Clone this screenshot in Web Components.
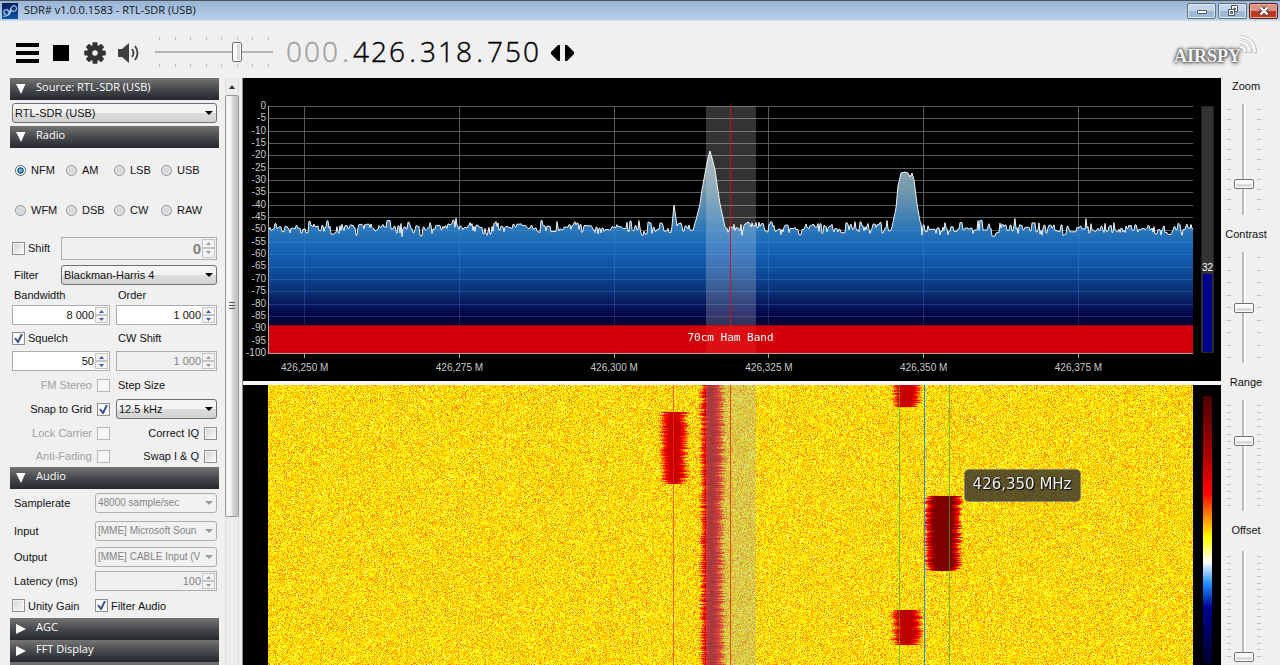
<!DOCTYPE html>
<html lang="en">
<head>
<meta charset="utf-8">
<title>SDR# v1.0.0.1583 - RTL-SDR (USB)</title>
<style>
html, body { margin: 0; height: 100%; overflow: hidden; background: #f0f0f0; }
body { font: 11px/14px "Liberation Sans", sans-serif; color: #111; }
</style>
</head>
<body>
<sdr-app></sdr-app>
<script>
const BASE = `*,*::before,*::after{box-sizing:border-box}button,input,select{font:inherit;color:inherit;margin:0}`;
function define(name, html, setup) {
  const t = document.createElement('template');
  customElements.define(name, class extends HTMLElement {
    connectedCallback() {
      if (this.shadowRoot) return;
      t.innerHTML = (typeof html === 'function' ? html(this) : html).replace('<style>', '<style>' + BASE);
      this.attachShadow({ mode: 'open' }).append(t.content.cloneNode(true));
      if (setup) setup.call(this, this.shadowRoot);
    }
  });
}
const at = (el, n, d = '') => el.getAttribute(n) ?? d;
function rng(seed) {
  return () => { seed = (seed * 1664525 + 1013904223) >>> 0; return seed / 4294967296; };
}

/* ---------- window title bar ---------- */
define('window-titlebar', `
<style>
:host{display:flex;align-items:center;height:21px;flex:none;padding:0 2px;gap:6px;border-top:1px solid #4d5258;
 background:linear-gradient(#98b4d6,#b9d1ea);border-bottom:1px solid #cfdcea;}
.icon{width:16px;height:16px;flex:none}
h1{margin:0;flex:1;font:11px/16px "Open Sans",sans-serif;color:#101418;padding-bottom:2px}
.btns{display:flex;gap:2px}
button{width:29px;height:16px;padding:0;border:1px solid #5f7186;border-radius:2px;box-shadow:inset 0 0 0 1px #dbe7f4;
 background:linear-gradient(#c3d4e8 50%,#9fb8d4 50%);display:grid;place-items:center}
button.close{background:linear-gradient(#dd9384 50%,#b93a25 50%);border-color:#5d2018;box-shadow:inset 0 0 0 1px #eba798}
</style>
<svg class="icon" viewBox="0 0 16 16"><defs><linearGradient id="g" x2="0" y2="1"><stop stop-color="#0a1f52"/><stop offset="1" stop-color="#0d55a8"/></linearGradient></defs><rect width="16" height="16" fill="url(#g)"/><path d="M1 13c3 1 6-1 7-5s3-6 5-5 2 4 0 5-4 0-4-2M9 8c-1 3-3 5-5 4s-3-4-1-5 3 0 4 2" fill="none" stroke="#a9c9ee" stroke-width="1.200"/></svg>
<h1><slot></slot></h1>
<div class="btns">
<button aria-label="Minimize"><svg width="12" height="10"><rect x="1.500" y="4.500" width="9" height="3" rx=".5" fill="#fff" stroke="#4b5563"/></svg></button>
<button aria-label="Restore"><svg width="12" height="12"><path d="M4.500.5h6v6h-6z" fill="#fff" stroke="#4b5563"/><path d="M7 3h1.500v1.500H7z" fill="#8fa6c0" stroke="#4b5563"/><path d="M1.500 4.500h6v6h-6z" fill="#fff" stroke="#4b5563"/><path d="M3.500 6.500h2v2h-2z" fill="#9fb8d4" stroke="#4b5563"/></svg></button>
<button class="close" aria-label="Close"><svg width="12" height="10"><path d="M2.500 1.500l7 7m0-7l-7 7" stroke="#4d3a40" stroke-width="4"/><path d="M2.500 1.500l7 7m0-7l-7 7" stroke="#fff" stroke-width="2.400"/></svg></button>
</div>`);

/* ---------- toolbar ---------- */
define('sdr-toolbar', `
<style>
:host{display:flex;align-items:center;height:56px;flex:none;padding:8px 23px 0 15px}
.tool{border:0;background:none;padding:0;display:grid;place-items:center;width:24px;height:24px;margin-right:10px}
.volume{width:118px;margin:0 12px 2px 4px;display:grid;gap:1px}
.ticks{display:flex;justify-content:space-between;padding:0 4px}
.ticks i{width:1px;height:3px;background:#bdbdbd}
input{appearance:none;width:100%;height:22px;background:linear-gradient(#b5b5b5,#b5b5b5) center/100% 2px no-repeat;border:0}
input::-webkit-slider-thumb{appearance:none;width:10px;height:20px;border:1px solid #707070;border-radius:2px;background:linear-gradient(90deg,#fafafa 50%,#dcdcdc 50%);box-shadow:inset 0 0 0 1px #fff}
.freq{display:flex;font:300 28px/32px "Open Sans",sans-serif;color:#000;margin-top:-4px}
.freq b{font-weight:300;width:18px;text-align:center;-webkit-text-stroke:.4px}
.freq b.dot{width:13px}
.freq .off{color:#a0a0a0}
.tune{border:0;background:none;padding:0;width:10px;height:16px;margin:0 0 0 3px}
.tune svg,.tool svg{display:block}
.tune.first{margin-left:11px}
.logo{margin-left:auto;position:relative;padding-right:16px;margin-top:6px;font:bold 18px/20px "Liberation Serif",serif;color:#f4f4f4;text-shadow:0 0 2px #555,0 0 3px #555,0 0 4px #777,1px 1px 4px #888}
.logo svg{position:absolute;right:0;top:-11px}
</style>
<button class="tool" aria-label="Menu"><svg width="24" height="20"><path d="M1 2h23M1 10h23M1 18h23" stroke="#000" stroke-width="4"/></svg></button>
<button class="tool" aria-label="Stop"><svg width="16" height="16"><rect width="16" height="16"/></svg></button>
<button class="tool" aria-label="Settings"><svg width="22" height="22" viewBox="-11 -11 22 22"><g fill="#333"><g id="teeth"></g><path fill-rule="evenodd" d="M0-8a8 8 0 1 0 .01 0zM0-2.800a2.800 2.800 0 1 1-.01 0z"/></g></svg></button>
<button class="tool" aria-label="Mute"><svg width="24" height="22"><path d="M1 7h4l7-6v20l-7-6H1z" fill="#404040"/><path d="M15 7q3 4 0 8M18 4q5 7 0 14" fill="none" stroke="#404040" stroke-width="1.800"/></svg></button>
<div class="volume"><div class="ticks"></div><input type="range" aria-label="Volume" value="71"><div class="ticks"></div></div>
<div class="freq" role="group" aria-label="Frequency"></div>
<button class="tune first" aria-label="Tune down"><svg width="10" height="16"><path d="M9 0v16H7L0 9V7L7 0z"/></svg></button>
<button class="tune" aria-label="Tune up"><svg width="10" height="16"><path d="M1 0v16h2l7-7V7L3 0z"/></svg></button>
<div class="logo">AIRSPY<svg width="20" height="20"><g fill="none" stroke="#777" stroke-width="3.500" opacity=".4"><path d="M3 12q5 0 6 6M3 7q9 1 11 11M3 2q14 1 16 16"/></g><g fill="none" stroke="#fff" stroke-width="2"><path d="M3 12q5 0 5 5M3 7q9 1 10 10M3 2q14 1 15 15"/></g></svg></div>`,
function (r) {
  r.querySelectorAll('.ticks').forEach(t => t.innerHTML = '<i></i>'.repeat(8));
  r.querySelector('#teeth').innerHTML = [0,45,90,135,180,225,270,315].map(a => `<rect x="-2.500" y="-10.800" width="5" height="5" rx="1" transform="rotate(${a})"/>`).join('');
  r.querySelector('.freq').innerHTML = [...'000.426.318.750'].map((c, i) => `<b class="${c === '.' ? 'dot ' : ''}${i < 4 ? 'off' : ''}">${c}</b>`).join('');
});

/* ---------- collapsible panel ---------- */
define('sdr-panel', el => `
<style>
:host{display:block}
button{display:flex;align-items:center;width:100%;height:22px;border:0;padding:0 0 0 6px;gap:10px;text-align:left;
 background:linear-gradient(#747474,#4c4e51 45%,#24282c);color:#fff;font:11px/18px "Open Sans",sans-serif}
span{padding-bottom:4px}
svg{flex:none}
.body{display:block;padding:0 2px}
</style>
<button aria-expanded="${el.hasAttribute('open')}"><svg width="10" height="10"><path fill="#fff" d="${el.hasAttribute('open') ? 'M0 0h9.500L5 10z' : 'M0 0l10 5L0 10z'}"/></svg><span>${at(el, 'heading')}</span></button>
<div class="body" ${el.hasAttribute('open') ? '' : 'hidden style="display:none"'}><slot></slot></div>`);

/* ---------- form controls ---------- */
define('sdr-select', el => `
<style>
:host{display:flex;align-items:center}
label{flex:0 0 var(--label,0);padding-left:2px}
.box{position:relative;flex:1;min-width:0}
select{appearance:none;display:block;width:100%;height:20px;padding:0 16px 0 2px;border:1px solid #707070;border-radius:3px;
 background:linear-gradient(#f4f4f4 50%,#dedede 50%,#d2d2d2);line-height:18px;overflow:hidden}
select:disabled{color:#838383;opacity:1;border-color:#b0b0b0;background:#f1f1f1;font-size:10px}
svg{position:absolute;right:4px;top:8px;pointer-events:none;fill:#000}
select:disabled + svg{fill:#9a9a9a}
</style>
${el.hasAttribute('label') ? `<label for="s">${at(el, 'label')}</label>` : ''}
<div class="box"><select id="s" ${el.hasAttribute('label') ? '' : `aria-label="${at(el, 'name')}"`} ${el.hasAttribute('disabled') ? 'disabled' : ''}><option>${at(el, 'value')}</option></select>
<svg width="8" height="4"><path d="M0 0h8L4 4z"/></svg></div>`);

define('sdr-number', el => `
<style>
:host{display:flex;align-items:center}
label{flex:0 0 var(--label,0);padding-left:2px}
.box{flex:1;min-width:0;display:flex;height:var(--h,20px);border:1px solid #abadb3;background:#fff;padding:1px}
.box.off{background:#f0f0f0;color:#838383}
input{flex:1;min-width:0;width:0;border:0;padding:0 1px 0 0;text-align:right;background:none;font-size:var(--size,11px)}
input:disabled{-webkit-text-fill-color:#838383}
.spin{display:grid;grid-template-rows:1fr 1fr;width:13px;flex:none}
.spin button{padding:0;border:1px solid #c4c4c4;background:#f3f3f3;display:grid;place-items:center;min-height:0}
svg{fill:#3d5ba9;display:block}
.off svg{fill:#9a9a9a}
</style>
${el.hasAttribute('label') ? `<label for="n">${at(el, 'label')}</label>` : ''}
<div class="box ${el.hasAttribute('disabled') ? 'off' : ''}"><input id="n" type="text" value="${at(el, 'value')}" ${el.hasAttribute('label') ? '' : `aria-label="${at(el, 'name')}"`} ${el.hasAttribute('disabled') ? 'disabled' : ''}>
<div class="spin"><button tabindex="-1" aria-label="Increase"><svg width="5" height="3"><path d="M0 3h5L2.500 0z"/></svg></button><button tabindex="-1" aria-label="Decrease"><svg width="5" height="3"><path d="M0 0h5L2.500 3z"/></svg></button></div></div>`);

define('sdr-check', el => `
<style>
:host{display:block}
label{display:flex;align-items:center;gap:3px}
:host([trailing]) label{flex-direction:row-reverse;gap:5px}
input{appearance:none;flex:none;width:13px;height:13px;border:1px solid #8e8f8f;background:linear-gradient(135deg,#cfd3d8,#fafafa);box-shadow:inset 0 0 0 1px #f4f4f4}
input:checked{background:#fff url('data:image/svg+xml,<svg xmlns="http://www.w3.org/2000/svg" width="11" height="11"><path d="M2 5l3 4 4-8" fill="none" stroke="%233b4f96" stroke-width="2"/></svg>') center no-repeat}
:host([disabled]) label{color:#a0a0a0}
input:disabled{border-color:#b9b9b9;background:#f6f6f6}
</style>
<label><input type="checkbox" ${el.hasAttribute('checked') ? 'checked' : ''} ${el.hasAttribute('disabled') ? 'disabled' : ''}><span>${at(el, 'label')}</span></label>`);

define('sdr-modes', `
<style>
:host{display:grid;grid-template-columns:51px 48px 47px auto;grid-auto-rows:40px;align-items:center;padding:2px 0 3px 3px}
label{display:flex;align-items:center;gap:5px}
input{appearance:none;width:11px;height:11px;flex:none;border-radius:50%;border:1px solid #8e8f8f;background:radial-gradient(#d5d8dc 40%,#fbfbfb)}
input:checked{background:radial-gradient(#6fc0ea 15%,#0d4872 45%,#fff 55%);border-color:#50647c}
</style>`, function (r) {
  r.innerHTML += ['NFM', 'AM', 'LSB', 'USB', 'WFM', 'DSB', 'CW', 'RAW'].map((m, i) =>
    `<label><input type="radio" name="mode" ${i ? '' : 'checked'}><span>${m}</span></label>`).join('');
});

define('sdr-scrollbar', `
<style>
:host{display:flex;flex-direction:column;width:14px;background:#ececec;border:solid #e0e0e0;border-width:0 1px}
button{border:0;background:none;height:17px;padding:0;display:grid;place-items:center}
.thumb{height:422px;border:1px solid #979797;border-radius:2px;background:linear-gradient(90deg,#f5f5f5 40%,#d2d2d4 60%,#bfc0c4);margin:0 -1px;display:grid;place-content:center;gap:1px}
.thumb i{width:6px;height:1px;background:#555;margin-bottom:1px}
.rest{flex:1}
</style>
<button aria-label="Scroll up"><svg width="6" height="4"><path d="M0 4h6L3 0z" fill="#333"/></svg></button>
<div class="thumb"><i></i><i></i><i></i></div><div class="rest"></div>
<button aria-label="Scroll down" style="height:6px"><svg width="6" height="4"><path d="M0 0h6L3 4z" fill="#333"/></svg></button>`);

/* ---------- vertical slider ---------- */
define('sdr-slider', el => `
<style>
:host{display:grid;justify-items:center;gap:10px;height:148px;align-content:start}
:host(:last-child){gap:13px}
label{height:16px;line-height:16px}
.track{display:flex;height:111px;gap:3px;margin-right:4px}
.ticks{display:flex;flex-direction:column;justify-content:space-between;padding:5px 0}
.ticks i{width:4px;height:1px;background:#bdbdbd}
input{appearance:none;writing-mode:vertical-lr;direction:rtl;width:20px;height:111px;border:0;background:linear-gradient(90deg,#bdbdbd 50%,#fff 50%) center/4px 100% no-repeat}
input::-webkit-slider-thumb{appearance:none;width:20px;height:10px;border:1px solid #707070;border-radius:2px;background:linear-gradient(#fafafa 50%,#dcdcdc 50%);box-shadow:inset 0 0 0 1px #fff}
</style>
<label for="r">${at(el, 'label')}</label>
<div class="track"><div class="ticks">${'<i></i>'.repeat(+at(el, 'ticks'))}</div><input id="r" type="range" value="${at(el, 'value')}"><div class="ticks">${'<i></i>'.repeat(+at(el, 'ticks'))}</div></div>`);

/* ---------- spectrum ---------- */
const SPAN = 925;
define('sdr-spectrum', `
<style>
:host{display:grid;grid-template:28px 247px 28px / 25px minmax(0,1fr) 28px;background:#000;color:#c8c8c8;font:10px/12px "Liberation Sans",sans-serif}
.y{grid-area:2/1;display:flex;flex-direction:column;justify-content:space-between;text-align:right;padding-right:2px;margin:-6px 0}
.plot{grid-area:2/2/4/3;position:relative;min-width:0}
canvas{display:block;width:100%;height:253px}
.band{position:absolute;left:0;right:0;top:219px;height:28px;text-align:center;color:#fff;font:11px/26px "DejaVu Sans Mono",monospace}
.x{display:grid;grid-template-columns:repeat(6,16.73%);margin-left:-4.4%;width:100%;text-align:center;padding-top:3px}
.meter{grid-area:2/3;width:13px;margin-left:8px;background:#333;border:1px solid #262626;display:flex;flex-direction:column;justify-content:flex-end;align-items:stretch;color:#fff}
.meter span{text-align:center}
.meter i{height:32%;background:#000090;margin:0 1px}
</style>
<div class="y"></div>
<div class="plot"><canvas></canvas><div class="band">70cm Ham Band</div><div class="x"></div></div>
<div class="meter"><span>32</span><i></i></div>`,
function (r) {
  r.querySelector('.y').innerHTML = Array.from({ length: 21 }, (_, i) => `<span>${i ? -i * 5 : 0}</span>`).join('');
  r.querySelector('.x').innerHTML = [250, 275, 300, 325, 350, 375].map(f => `<span>426,${f} M</span>`).join('');
  const c = r.querySelector('canvas');
  const peak1 = [[426, 121], [428, 114], [432, 98], [434, 84], [438, 62], [440, 52], [442, 45], [444, 52], [447, 64], [449, 78], [452, 98], [457, 121]];
  const peak2 = [[624, 121], [628, 102], [630, 80], [633, 67], [637, 66], [640, 67], [642, 71], [644, 67], [646, 74], [649, 98], [653, 121]];
  const spike = [[404, 120], [406, 99], [409, 120]];
  const interp = (pts, x) => {
    for (let i = 1; i < pts.length; i++) if (x >= pts[i - 1][0] && x <= pts[i][0]) {
      const [a, b] = pts[i - 1], [d, e] = pts[i]; return b + (e - b) * (x - a) / (d - a);
    }
    return 999;
  };
  const draw = () => {
    const w = c.clientWidth, h = 247, k = w / SPAN;
    if (!w) return;
    c.width = w; c.height = 253;
    const g = c.getContext('2d'), rand = rng(7);
    const grid = (col) => {
      g.fillStyle = col;
      for (let i = 0; i < 20; i++) g.fillRect(0, Math.round(i * h / 20), w, 1);
      for (let i = 0; i < 6; i++) g.fillRect(Math.round((36 + i * 154.8) * k), 0, 1, h);
    };
    g.fillStyle = '#000'; g.fillRect(0, 0, w, 253);
    grid('#585858');
    const ys = []; let drift = 0, hold = 0;
    for (let x = 0; x <= w; x++) {
      const s = x / k;
      if (rand() > .35) { hold = (rand() + rand() + rand() - 1.5) * 6.5; drift = drift * .5 + (rand() - .5) * 3; }
      let y = 122 + hold + drift;
      if (s >= 429 && s <= 455 || s >= 624 && s <= 652) y = Math.max(y, 119);
      y = Math.min(y, interp(peak1, s), interp(peak2, s), interp(spike, s));
      ys.push(y);
    }
    const grad = g.createLinearGradient(0, 0, 0, h);
    [[0, '#c8c3b9'], [.19, '#a4aeae'], [.35, '#6f96aa'], [.5, '#2b76b6'], [.57, '#1766b8'], [.66, '#1050a0'], [.76, '#0a2c70'], [.84, '#03074a'], [.9, '#000028'], [1, '#000010']].forEach(s => grad.addColorStop(...s));
    g.beginPath(); g.moveTo(0, h); ys.forEach((y, x) => g.lineTo(x, y)); g.lineTo(w, h); g.closePath();
    g.fillStyle = grad; g.fill();
    g.save(); g.clip(); grid('rgba(90,150,240,.26)'); g.restore();
    g.beginPath(); ys.forEach((y, x) => x ? g.lineTo(x, y) : g.moveTo(x, y));
    g.strokeStyle = '#eef4f8'; g.lineWidth = 1; g.stroke();
    g.fillStyle = '#d10008'; g.fillRect(0, 219, w, 28);
    g.fillStyle = '#8f0010'; g.fillRect(0, 219, w, 1);
    g.fillStyle = 'rgba(255,255,255,.2)'; g.fillRect(438 * k, 0, 50 * k, 219);
    g.fillStyle = 'rgba(255,60,60,.25)'; g.fillRect(438 * k, 219, 50 * k, 28);
    g.fillStyle = 'rgba(225,10,20,.85)'; g.fillRect(Math.round(462 * k), 0, 1, h);
    g.fillStyle = '#aaa'; g.fillRect(0, 0, 1, h); g.fillRect(0, h, w, 1);
    for (let i = 0; i < 6; i++) g.fillRect(Math.round((36 + i * 154.8) * k), h, 1, 5);
  };
  draw(); new ResizeObserver(draw).observe(c);
});

/* ---------- waterfall ---------- */
define('sdr-waterfall', `
<style>
:host{display:grid;grid-template-columns:25px minmax(0,1fr) 28px;background:#000;min-height:0;overflow:hidden}
.view{grid-column:2;position:relative;min-height:0;overflow:hidden}
canvas{display:block;width:100%;height:100%}
.tip{position:absolute;left:75.200%;top:84px;padding:0 8px;height:33px;border:1px solid rgba(150,150,120,.8);border-radius:5px;
 background:rgba(52,50,46,.8);color:#f4f4f4;font:15px/29px "DejaVu Sans",sans-serif;text-shadow:0 0 2px #000,1px 1px 1px #000;white-space:nowrap}
.scale{width:9px;margin:11px 0 6px 10px;background:linear-gradient(#4b0000,#a00 22%,#f00 36%,#f80 45%,#ff0 53%,#fff 62%,#1e90ff 70%,#000091 79%,#000028)}
</style>
<div class="view"><canvas></canvas><div class="tip">426,350 MHz</div></div><div class="scale"></div>`,
function (r) {
  const c = r.querySelector('canvas');
  const stops = [[0, 75, 0, 0], [.22, 170, 0, 0], [.36, 255, 0, 0], [.53, 255, 255, 0], [.625, 255, 255, 255], [.7, 30, 144, 255], [.79, 0, 0, 145], [1, 0, 0, 40]];
  const lut = Array.from({ length: 256 }, (_, n) => {
    const t = n / 255; let i = 1; while (stops[i][0] < t) i++;
    const a = stops[i - 1], b = stops[i], f = (t - a[0]) / (b[0] - a[0]);
    return [1, 2, 3].map(j => a[j] + (b[j] - a[j]) * f);
  });
  // x0, x1, y0, y1, palette level at the core
  const bursts = [[394, 416, 27, 98, .27], [434, 453, -9, 9999, .22], [626, 650, -9, 21, .27], [626, 650, 225, 259, .25], [659, 689, 111, 185, .12]];
  const draw = () => {
    const w = c.clientWidth, h = c.clientHeight, k = w / SPAN;
    if (!w || !h) return;
    c.width = w; c.height = h;
    const g = c.getContext('2d'), img = g.createImageData(w, h), rand = rng(99), d = img.data;
    for (let y = 0; y < h; y++) {
      const jit = bursts.map(() => [(rand() - .5) * 5, (rand() - .5) * 6]);
      for (let x = 0; x < w; x++) {
        const s = x / k;
        const n = (rand() + rand() + rand() + rand() - 2) * .055;
        let t = .508 + n + (rand() > .97 ? .1 * rand() : 0);
        for (let i = 0; i < bursts.length; i++) {
          const b = bursts[i];
          if (y < b[2] || y > b[3] || s < b[0] - 12 || s > b[1] + 16) continue;
          const cut = Math.max(0, 5 - (b[3] - y)) / 2;
          const e = Math.min(1, Math.max(0, Math.min((s - b[0] + 3 - cut + jit[i][0]) / 10, (b[1] + 4 - cut - s + jit[i][1]) / (i === 1 ? 13 : 10))));
          t = t * (1 - e) + (b[4] + n * .6) * e;
        }
        const q = lut[Math.max(0, Math.min(255, t * 255 | 0))], o = (y * w + x) * 4;
        d[o] = q[0]; d[o + 1] = q[1]; d[o + 2] = q[2]; d[o + 3] = 255;
      }
    }
    g.putImageData(img, 0, 0);
    const bar = (x, wd, col) => { g.fillStyle = col; g.fillRect(Math.round(x * k), 0, Math.max(1, Math.round(wd * k)), h); };
    bar(438, 50, 'rgba(150,170,180,.34)');
    bar(405, 1, 'rgba(255,40,0,.65)');
    bar(462, 1, 'rgba(255,50,20,.85)');
    bar(631, 1, 'rgba(40,180,40,.65)');
    bar(681, 1, 'rgba(40,180,40,.65)');
    bar(656, 1, '#2090ff');
  };
  draw(); new ResizeObserver(draw).observe(c);
});

/* ---------- application shell ---------- */
define('sdr-app', `
<style>
:host{display:flex;flex-direction:column;height:100vh;overflow:hidden;background:#f0f0f0}
main{flex:1;min-height:0;display:grid;grid-template-columns:242px minmax(0,1fr) 59px;margin-top:1px}
.side{display:flex;min-height:0;overflow:hidden;padding:0 3px 0 10px;gap:6px;justify-content:space-between}
.panels{flex:1;min-height:0;overflow:hidden}
.source{padding:3px 0}
.row{display:grid;grid-template-columns:98px 101px;gap:6px;align-items:center;height:24px}
.row.low{height:22px}
.row.cap{height:16px}
.row.cap span,.in{padding-left:2px}
.one{height:24px}
.tall{height:30px;display:grid;grid-template-columns:49px 1fr;align-items:center;--h:23px}
.tall sdr-number{--size:15px;font-weight:bold}
.mid{height:28px}
.f{--label:49px}.a{--label:83px}
.left,.right{justify-self:end}
.pair{display:grid;grid-template-columns:83px 1fr;height:25px;align-items:center}
.center{display:flex;flex-direction:column;min-height:0;border-left:1px solid #888;gap:4px;background:#f6f6f6}
sdr-waterfall{flex:1}
sdr-slider{margin-right:9px}
</style>
<window-titlebar>SDR# v1.0.0.1583 - RTL-SDR (USB)</window-titlebar>
<sdr-toolbar></sdr-toolbar>
<main>
<section class="side">
<div class="panels">
<sdr-panel heading="Source: RTL-SDR (USB)" open><div class="source"><sdr-select name="Source" value="RTL-SDR (USB)"></sdr-select></div></sdr-panel>
<sdr-panel heading="Radio" open>
<sdr-modes></sdr-modes>
<div class="tall"><sdr-check label="Shift"></sdr-check><sdr-number name="Shift" value="0" disabled></sdr-number></div>
<sdr-select class="one f" label="Filter" value="Blackman-Harris 4"></sdr-select>
<div class="row cap"><span>Bandwidth</span><span>Order</span></div>
<div class="row"><sdr-number name="Bandwidth" value="8 000"></sdr-number><sdr-number name="Order" value="1 000"></sdr-number></div>
<div class="row low"><sdr-check label="Squelch" checked></sdr-check><span class="in">CW Shift</span></div>
<div class="row"><sdr-number name="Squelch" value="50"></sdr-number><sdr-number name="CW Shift" value="1 000" disabled></sdr-number></div>
<div class="row"><sdr-check class="left" trailing label="FM Stereo" disabled></sdr-check><span class="in">Step Size</span></div>
<div class="row"><sdr-check class="left" trailing label="Snap to Grid" checked></sdr-check><sdr-select name="Step Size" value="12.5 kHz"></sdr-select></div>
<div class="row"><sdr-check class="left" trailing label="Lock Carrier" disabled></sdr-check><sdr-check class="right" trailing label="Correct IQ"></sdr-check></div>
<div class="row low"><sdr-check class="left" trailing label="Anti-Fading" disabled></sdr-check><sdr-check class="right" trailing label="Swap I &amp; Q"></sdr-check></div>
</sdr-panel>
<sdr-panel heading="Audio" open>
<sdr-select class="mid a" label="Samplerate" value="48000 sample/sec" disabled></sdr-select>
<sdr-select class="mid a" label="Input" value="[MME] Microsoft Soun" disabled></sdr-select>
<sdr-select class="one a" label="Output" value="[MME] CABLE Input (V" disabled></sdr-select>
<sdr-number class="one a" label="Latency (ms)" value="100" disabled></sdr-number>
<div class="pair"><sdr-check label="Unity Gain"></sdr-check><sdr-check label="Filter Audio" checked></sdr-check></div>
</sdr-panel>
<sdr-panel heading="AGC"></sdr-panel>
<sdr-panel heading="FFT Display"></sdr-panel>
<sdr-panel></sdr-panel>
</div>
<sdr-scrollbar></sdr-scrollbar>
</section>
<section class="center"><sdr-spectrum></sdr-spectrum><sdr-waterfall></sdr-waterfall></section>
<section class="ctl">
<sdr-slider label="Zoom" ticks="11" value="26"></sdr-slider>
<sdr-slider label="Contrast" ticks="9" value="50"></sdr-slider>
<sdr-slider label="Range" ticks="15" value="64"></sdr-slider>
<sdr-slider label="Offset" ticks="16" value="0"></sdr-slider>
</section>
</main>`);
</script>
</body>
</html>
